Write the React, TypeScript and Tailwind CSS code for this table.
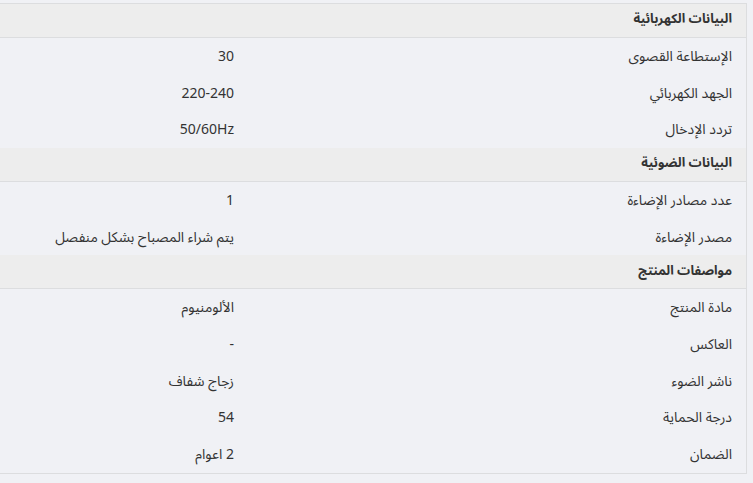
const sections = [
  {
    title: "البيانات الكهربائية",
    rows: [
      ["الإستطاعة القصوى", "30"],
      ["الجهد الكهربائي", "220-240"],
      ["تردد الإدخال", "50/60Hz"],
    ],
  },
  {
    title: "البيانات الضوئية",
    rows: [
      ["عدد مصادر الإضاءة", "1"],
      ["مصدر الإضاءة", "يتم شراء المصباح بشكل منفصل"],
    ],
  },
  {
    title: "مواصفات المنتج",
    rows: [
      ["مادة المنتج", "الألومنيوم"],
      ["العاكس", "-"],
      ["ناشر الضوء", "زجاج شفاف"],
      ["درجة الحماية", "54"],
      ["الضمان", "2 اعوام"],
    ],
  },
];

export default function App() {
  return (
    <div
      className="min-h-[483px] w-[753px] bg-[#f0f1f5] pt-[3px] pr-[6px] text-[#333]"
      style={{ fontFamily: '"Noto Sans Arabic", "Noto Sans", "DejaVu Sans", sans-serif' }}
    >
      <div dir="rtl" className="border border-l-0 border-[#dcdddf]">
        {sections.map((sec, si) => (
          <div key={si}>
            <div className="flex h-[34px] items-center border-b border-[#dcdddf] bg-[#ededed] px-[14px] pb-[1px] text-[13px] font-bold">
              {sec.title}
            </div>
            {sec.rows.map(([label, value], ri) => (
              <div key={ri} className="flex h-[36.7px] items-center text-[14px]">
                <div className="w-[501px] shrink-0 pr-[14px]">{label}</div>
                <div className="flex-1 pr-[11px]">{value}</div>
              </div>
            ))}
          </div>
        ))}
      </div>
    </div>
  );
}
